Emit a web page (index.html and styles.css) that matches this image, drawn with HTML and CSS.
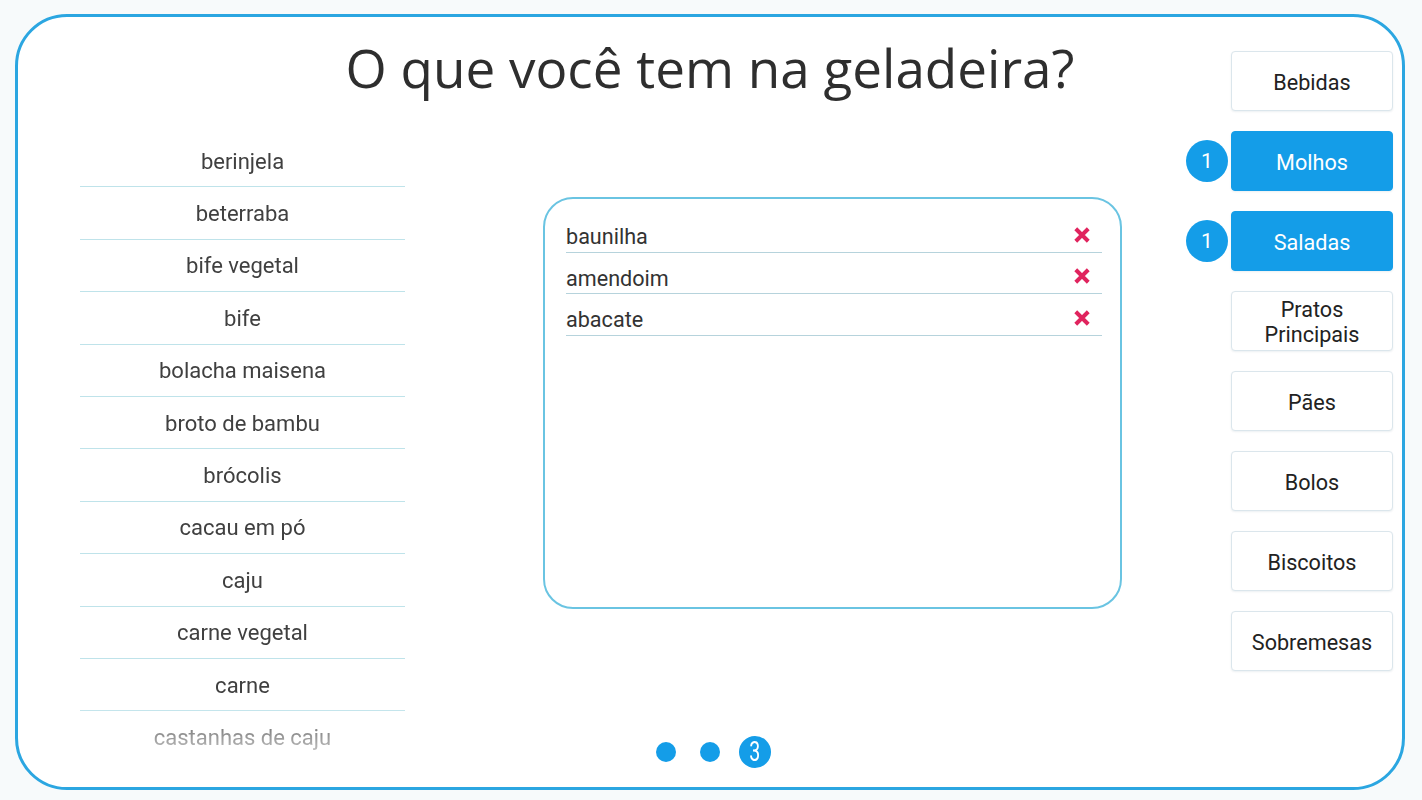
FILE: index.html
```html
<!DOCTYPE html>
<html lang="pt">
<head>
<meta charset="utf-8">
<title>O que você tem na geladeira?</title>
<link rel="stylesheet" href="styles.css">
</head>
<body>
<div class="frame">
  <h1 class="title">O que você tem na geladeira?</h1>

  <ul class="ingredients">
    <li>berinjela</li>
    <li>beterraba</li>
    <li>bife vegetal</li>
    <li>bife</li>
    <li>bolacha maisena</li>
    <li>broto de bambu</li>
    <li>brócolis</li>
    <li>cacau em pó</li>
    <li>caju</li>
    <li>carne vegetal</li>
    <li>carne</li>
    <li>castanhas de caju</li>
  </ul>

  <div class="selected">
    <div class="sel-row"><span>baunilha</span><svg class="x" viewBox="0 0 16 16"><path d="M3 3L13 13M13 3L3 13"/></svg></div>
    <div class="sel-row"><span>amendoim</span><svg class="x" viewBox="0 0 16 16"><path d="M3 3L13 13M13 3L3 13"/></svg></div>
    <div class="sel-row"><span>abacate</span><svg class="x" viewBox="0 0 16 16"><path d="M3 3L13 13M13 3L3 13"/></svg></div>
  </div>

  <nav class="cats">
    <div class="cat"><span class="btn">Bebidas</span></div>
    <div class="cat"><span class="badge">1</span><span class="btn active">Molhos</span></div>
    <div class="cat"><span class="badge">1</span><span class="btn active">Saladas</span></div>
    <div class="cat"><span class="btn two">Pratos<br>Principais</span></div>
    <div class="cat"><span class="btn">Pães</span></div>
    <div class="cat"><span class="btn">Bolos</span></div>
    <div class="cat"><span class="btn">Biscoitos</span></div>
    <div class="cat"><span class="btn">Sobremesas</span></div>
  </nav>

  <div class="pager">
    <span class="dot"></span>
    <span class="dot"></span>
    <span class="page"><span class="num">3</span></span>
  </div>
</div>
</body>
</html>
```

FILE: styles.css
```css
* { box-sizing: border-box; }

html, body {
  margin: 0;
  padding: 0;
  background: #f7fafb;
  font-family: Roboto, "Liberation Sans", sans-serif;
}

body {
  width: 1422px;
  height: 800px;
  overflow: hidden;
  padding: 14px 0 0 15px;
}

.frame {
  width: 1390px;
  height: 776px;
  border: 3px solid #2ba6e1;
  border-radius: 52px;
  background: #ffffff;
  padding: 0 9px 12px 62px;
  display: grid;
  grid-template-columns: 325px 1fr 207px;
  grid-template-rows: 118px 590px 50px;
}

.title {
  grid-column: 1 / -1;
  grid-row: 1;
  margin: 0 -9px 0 -62px;
  padding-top: 20px;
  text-align: center;
  font-family: "Open Sans", "Liberation Sans", sans-serif;
  font-weight: 400;
  font-size: 53px;
  line-height: 62px;
  color: #2e2e2e;
  letter-spacing: 0;
}

.ingredients {
  grid-column: 1;
  grid-row: 2 / 4;
  list-style: none;
  margin: 0;
  padding: 0;
  height: 630px;
  overflow: hidden;
  -webkit-mask-image: linear-gradient(to bottom, #000 0, #000 570px, rgba(0,0,0,0.2) 625px, rgba(0,0,0,0) 630px);
  mask-image: linear-gradient(to bottom, #000 0, #000 570px, rgba(0,0,0,0.2) 625px, rgba(0,0,0,0) 630px);
}

.ingredients li {
  height: 52.4px;
  border-bottom: 1px solid #bfe3ea;
  display: flex;
  align-items: center;
  justify-content: center;
  padding-top: 1px;
  font-size: 22px;
  color: #404040;
}

.ingredients li:last-child {
  border-bottom: none;
}

.selected {
  grid-column: 2;
  grid-row: 2;
  margin: 62px 64px 0 138px;
  height: 412px;
  border: 2px solid #6ac4e2;
  border-radius: 30px;
  padding: 12px 18px 0 21px;
}

.sel-row {
  height: 41.5px;
  border-bottom: 1.5px solid #b6d3dc;
  display: flex;
  align-items: center;
  justify-content: space-between;
  padding-top: 11px;
  font-size: 21.6px;
  color: #333;
}

.x {
  width: 20px;
  height: 20px;
  margin-right: 10px;
  margin-top: -4px;
  fill: none;
  stroke: #e0245e;
  stroke-width: 3.2;
  stroke-linecap: butt;
}

.cats {
  grid-column: 3;
  grid-row: 1 / 3;
  padding-top: 34px;
  display: flex;
  flex-direction: column;
  gap: 20px;
}

.cat {
  display: flex;
  align-items: center;
  justify-content: flex-end;
  gap: 3px;
  height: 60px;
}

.btn {
  width: 162px;
  height: 60px;
  display: flex;
  align-items: center;
  justify-content: center;
  text-align: center;
  border: 1px solid #dbe6ec;
  border-radius: 4px;
  background: #fff;
  box-shadow: 0 1px 2px rgba(0, 60, 90, 0.08);
  font-size: 21.6px;
  line-height: 25px;
  color: #222;
  padding-top: 2px;
}

.btn.active {
  background: #149de8;
  border-color: #149de8;
  color: #ffffff;
}

.badge {
  width: 42px;
  height: 42px;
  border-radius: 50%;
  background: #149de8;
  color: #fff;
  font-size: 21px;
  display: flex;
  align-items: center;
  justify-content: center;
  box-shadow: 0 0 0 2px #fff;
}

.pager {
  grid-column: 1 / -1;
  grid-row: 3;
  margin: 0 -9px 0 -62px;
  display: flex;
  align-items: center;
  justify-content: center;
  padding: 4px 6px 0 0;
}

.dot {
  width: 20px;
  height: 20px;
  border-radius: 50%;
  background: #149de8;
  margin: 0 12px;
}

.page {
  width: 32px;
  height: 32px;
  border-radius: 50%;
  background: #149de8;
  color: #fff;
  margin-left: 7px;
  display: flex;
  align-items: center;
  justify-content: center;
}

.num {
  display: block;
  font-family: Roboto, sans-serif;
  font-weight: 400;
  font-size: 28px;
  line-height: 32px;
  transform: scaleX(0.7);
}
```
